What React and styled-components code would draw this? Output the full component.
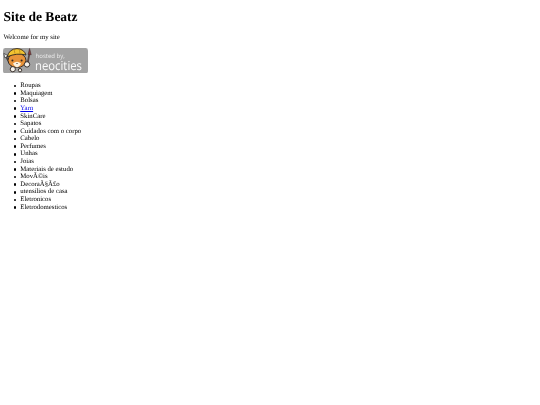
import React from 'react';
import styled, { createGlobalStyle } from 'styled-components';

const GlobalStyle = createGlobalStyle`
    html, body {
        background: #fff;
    }
    body {
        margin: 0;
        color: #000;
        font-family: "Liberation Serif", "Times New Roman", serif;
        font-size: 6.75px;
        text-rendering: geometricPrecision;
    }
`;

// the reference is a scaled down capture, so everything is slightly soft
const Page = styled.main`
    padding: 0 3.375px;
    filter: blur(0.2px);
`;

const Title = styled.h1`
    margin: 0;
    padding: 9.05px 0;
    font-size: 13.5px;
    line-height: 15.5px;
    font-weight: bold;
`;

const Intro = styled.p`
    margin: 0;
    padding-bottom: 6.75px;
    line-height: 7.6px;
`;

const BadgeLink = styled.a`
    display: block;
    width: 85px;
    height: 26.8px;
`;

const Menu = styled.ul`
    margin: 7.4px 0 6.75px;
    padding: 0 0 0 16.9px;
    line-height: 7.6px;
    list-style: none;

    a {
        color: #0000ee;
    }
`;

const MenuItem = styled.li`
    display: flex;
    align-items: center;

    &::before {
        content: "";
        flex: none;
        width: 2.6px;
        height: 2.6px;
        margin-left: -6.4px;
        margin-right: 3.8px;
        border-radius: 50%;
        background: #000;
    }
`;

const Badge = () => (
    <svg width="85" height="25.4" viewBox="0 0 85 25.4" role="img" aria-label="hosted by neocities">
        <rect x="0" y="0" width="85" height="25.4" rx="2.4" fill="#a3a3a3" />
        {/* wrench */}
        <path d="M2.5 8 L10 20" stroke="#4a4a4a" strokeWidth="2" />
        <path d="M0.8 5.4 L1.8 10 L5.2 7.8 Z" fill="#ececec" stroke="#333" strokeWidth="0.7" />
        {/* brush */}
        <path d="M24.6 15 L26.4 5.5" stroke="#5a4540" strokeWidth="1.7" />
        <path d="M25 6.4 L26.6 0.5 L28.2 6.8 Z" fill="#8c3b3b" stroke="#3a2a2a" strokeWidth="0.5" />
        {/* cat head */}
        <ellipse cx="14" cy="12.4" rx="9" ry="7.2" fill="#e8933a" stroke="#2d2420" strokeWidth="0.9" />
        <path d="M10 15.6 Q14 12 18 15.6 Q16 19.4 14 19.4 Q12 19.4 10 15.6 Z" fill="#fdf1dc" />
        <circle cx="9.4" cy="12.4" r="1" fill="#2d2420" />
        <circle cx="18.6" cy="12.4" r="1" fill="#2d2420" />
        <path d="M13 15 L15 15 L14 16.1 Z" fill="#2d2420" />
        {/* hard hat */}
        <path d="M4.2 8.8 Q6 1 14 0.6 Q21 1 23 7 Q14 4.6 4.2 8.8 Z" fill="#f2c230" stroke="#2d2420" strokeWidth="0.9" />
        <path d="M11 1.4 L12 5.6 M16.5 1.4 L17 5.6" stroke="#b98a1c" strokeWidth="0.8" />
        {/* hands and feet */}
        <circle cx="9.8" cy="21.2" r="2.6" fill="#f6f2ea" stroke="#2d2420" strokeWidth="0.9" />
        <circle cx="17" cy="22.2" r="1.7" fill="#f6f2ea" stroke="#2d2420" strokeWidth="0.9" />
        <circle cx="24" cy="16.4" r="2.7" fill="#f6f2ea" stroke="#2d2420" strokeWidth="0.9" />
        <text x="32.6" y="10" fontFamily="Open Sans, sans-serif" fontSize="6" fill="#ececec">hosted by,</text>
        <text x="32" y="21.6" fontFamily="Open Sans, sans-serif" fontSize="12.4" fill="#fafafa" textLength="47" lengthAdjust="spacingAndGlyphs">neocities</text>
    </svg>
);

const categories = [
    { name: 'Roupas' },
    { name: 'Maquiagem' },
    { name: 'Bolsas' },
    { name: 'Yarn', href: '#yarn' },
    { name: 'SkinCare' },
    { name: 'Sapatos' },
    { name: 'Cuidados com o corpo' },
    { name: 'Cabelo' },
    { name: 'Perfumes' },
    { name: 'Unhas' },
    { name: 'Joias' },
    { name: 'Materiais de estudo' },
    { name: 'MovÃ©is' },
    { name: 'DecoraÃ§Ã£o' },
    { name: 'utensilios de casa' },
    { name: 'Eletronicos' },
    { name: 'Eletrodomesticos' },
];

const App = () => {
    return (
        <Page>
            <GlobalStyle />
            <Title>Site de Beatz</Title>
            <Intro>Welcome for my site</Intro>
            <BadgeLink href="#neocities">
                <Badge />
            </BadgeLink>
            <Menu>
                {categories.map((item) => (
                    <MenuItem key={item.name}>
                        {item.href ? <a href={item.href}>{item.name}</a> : item.name}
                    </MenuItem>
                ))}
            </Menu>
        </Page>
    );
};

export default App;
